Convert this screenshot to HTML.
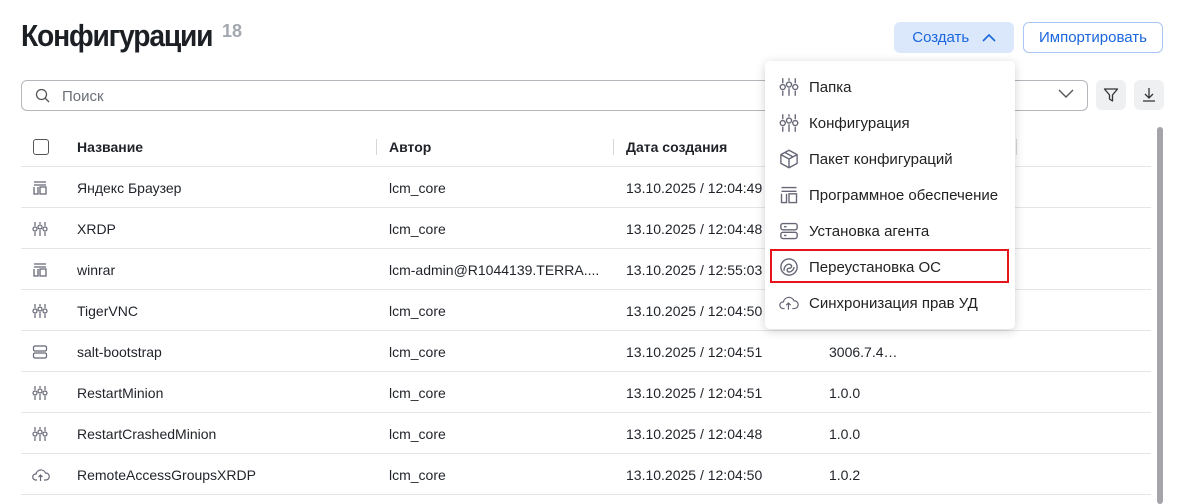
<!DOCTYPE html><html><head><meta charset="utf-8"><style>
*{box-sizing:border-box;margin:0;padding:0}
body{width:1184px;height:504px;overflow:hidden;background:#fff;font-family:"Liberation Sans",sans-serif;color:#1f2329;position:relative;font-size:14px}
.a{position:absolute}
h1{position:absolute;left:21px;top:18px;font-size:31px;font-weight:bold;letter-spacing:-1.3px;color:#1c1f23;transform:scaleX(0.91);transform-origin:0 0}
.cnt{left:222px;top:21px;font-size:18px;color:#a3a8b0;font-weight:bold}
.btn{top:22px;height:31px;border-radius:6px;font-size:15px;color:#1a66dd;display:flex;align-items:center;justify-content:center}
.hl{top:166px;left:21px;width:1130px;height:1px;background:#e3e5e8}
.row{position:absolute;left:0;width:1150px;height:41px}
.row span{position:absolute;top:13px;font-size:14px}
.ic{position:absolute;left:32px;top:13px}
.dd{left:765px;top:61px;width:250px;height:268px;background:#fff;border-radius:5px;box-shadow:0 2px 10px rgba(0,0,0,.18)}
.it{position:absolute;left:0;height:36px;width:250px}
.it span{position:absolute;left:44px;top:10px;font-size:15px;color:#222}
.it svg{position:absolute;left:14px;top:8px}
</style></head><body>
<h1>Конфигурации</h1><div class="a cnt">18</div>
<div class="a btn" style="left:894px;width:120px;background:#dbe8fc">Создать&nbsp;&nbsp;&nbsp;<svg width="14" height="9" viewBox="0 0 14 9"><path d="M1 8L7 2L13 8" fill="none" stroke="#1a66dd" stroke-width="1.6"/></svg></div>
<div class="a btn" style="left:1023px;width:140px;border:1px solid #a9c6f5">Импортировать</div>
<div class="a" style="left:21px;top:80px;width:1067px;height:31px;border:1px solid #b3b6bb;border-radius:6px"></div>
<svg class="a" style="left:35px;top:88px" width="15" height="15" viewBox="0 0 15 15"><circle cx="6.5" cy="6.5" r="5" fill="none" stroke="#555" stroke-width="1.3"/><path d="M10 10L14 14" stroke="#555" stroke-width="1.3"/></svg>
<div class="a" style="left:62px;top:88px;font-size:15px;color:#6b7078">Поиск</div>
<svg class="a" style="left:1058px;top:89px" width="16" height="10" viewBox="0 0 16 10"><path d="M1 1L8 8L15 1" fill="none" stroke="#555" stroke-width="1.4"/></svg>
<div class="a" style="left:1096px;top:80px;width:30px;height:30px;background:#eff0f2;border-radius:6px"></div>
<svg class="a" style="left:1103px;top:87px" width="16" height="16" viewBox="0 0 16 16"><path d="M1.5 2H14.5L9.5 8V14L6.5 12V8Z" fill="none" stroke="#333" stroke-width="1.3" stroke-linejoin="round"/></svg>
<div class="a" style="left:1134px;top:80px;width:30px;height:30px;background:#eff0f2;border-radius:6px"></div>
<svg class="a" style="left:1141px;top:87px" width="16" height="16" viewBox="0 0 16 16"><path d="M8 1V11M4 7L8 11L12 7M2 14H14" fill="none" stroke="#333" stroke-width="1.3"/></svg>
<div class="a" style="left:33px;top:139px;width:16px;height:16px;border:1.5px solid #555;border-radius:3px"></div>
<div class="a" style="left:77px;top:139px;font-weight:bold">Название</div>
<div class="a" style="left:376px;top:139px;width:1px;height:16px;background:#d5d7da"></div>
<div class="a" style="left:389px;top:139px;font-weight:bold">Автор</div>
<div class="a" style="left:613px;top:139px;width:1px;height:16px;background:#d5d7da"></div>
<div class="a" style="left:626px;top:139px;font-weight:bold">Дата создания</div>
<div class="a" style="left:1016px;top:139px;width:1px;height:16px;background:#d5d7da"></div>
<div class="a hl"></div>
<div class="a" style="left:1157px;top:127px;width:6px;height:377px;background:#a3a5a8;border-radius:3px"></div>

<div class="row" style="top:167px"><svg class="ic" width="16" height="16" viewBox="0 0 16 16"><path d="M2 2H14M2 5H14M2 7V14H6V7M8 7H14V14H8Z" fill="none" stroke="#667" stroke-width="1.3"/></svg><span style="left:77px">Яндекс Браузер</span><span style="left:389px">lcm_core</span><span style="left:626px">13.10.2025 / 12:04:49</span></div>
<div class="a hl" style="top:207px"></div>
<div class="row" style="top:208px"><svg class="ic" width="16" height="16" viewBox="0 0 16 16"><g fill="none" stroke="#667" stroke-width="1.2"><path d="M3 1V5M3 11V15M8 1V3M8 9V15M13 1V5M13 11V15"/><circle cx="3" cy="8" r="2"/><circle cx="8" cy="6" r="2"/><circle cx="13" cy="8" r="2"/></g></svg><span style="left:77px">XRDP</span><span style="left:389px">lcm_core</span><span style="left:626px">13.10.2025 / 12:04:48</span></div>
<div class="a hl" style="top:248px"></div>
<div class="row" style="top:249px"><svg class="ic" width="16" height="16" viewBox="0 0 16 16"><path d="M2 2H14M2 5H14M2 7V14H6V7M8 7H14V14H8Z" fill="none" stroke="#667" stroke-width="1.3"/></svg><span style="left:77px">winrar</span><span style="left:389px">lcm-admin@R1044139.TERRA....</span><span style="left:626px">13.10.2025 / 12:55:03</span></div>
<div class="a hl" style="top:289px"></div>
<div class="row" style="top:290px"><svg class="ic" width="16" height="16" viewBox="0 0 16 16"><g fill="none" stroke="#667" stroke-width="1.2"><path d="M3 1V5M3 11V15M8 1V3M8 9V15M13 1V5M13 11V15"/><circle cx="3" cy="8" r="2"/><circle cx="8" cy="6" r="2"/><circle cx="13" cy="8" r="2"/></g></svg><span style="left:77px">TigerVNC</span><span style="left:389px">lcm_core</span><span style="left:626px">13.10.2025 / 12:04:50</span></div>
<div class="a hl" style="top:330px"></div>
<div class="row" style="top:331px"><svg class="ic" width="16" height="16" viewBox="0 0 16 16"><g fill="none" stroke="#667" stroke-width="1.2"><rect x="1.5" y="2" width="13" height="5" rx="1.5"/><rect x="1.5" y="9" width="13" height="5" rx="1.5"/></g></svg><span style="left:77px">salt-bootstrap</span><span style="left:389px">lcm_core</span><span style="left:626px">13.10.2025 / 12:04:51</span><span style="left:829px">3006.7.4…</span></div>
<div class="a hl" style="top:371px"></div>
<div class="row" style="top:372px"><svg class="ic" width="16" height="16" viewBox="0 0 16 16"><g fill="none" stroke="#667" stroke-width="1.2"><path d="M3 1V5M3 11V15M8 1V3M8 9V15M13 1V5M13 11V15"/><circle cx="3" cy="8" r="2"/><circle cx="8" cy="6" r="2"/><circle cx="13" cy="8" r="2"/></g></svg><span style="left:77px">RestartMinion</span><span style="left:389px">lcm_core</span><span style="left:626px">13.10.2025 / 12:04:51</span><span style="left:829px">1.0.0</span></div>
<div class="a hl" style="top:412px"></div>
<div class="row" style="top:413px"><svg class="ic" width="16" height="16" viewBox="0 0 16 16"><g fill="none" stroke="#667" stroke-width="1.2"><path d="M3 1V5M3 11V15M8 1V3M8 9V15M13 1V5M13 11V15"/><circle cx="3" cy="8" r="2"/><circle cx="8" cy="6" r="2"/><circle cx="13" cy="8" r="2"/></g></svg><span style="left:77px">RestartCrashedMinion</span><span style="left:389px">lcm_core</span><span style="left:626px">13.10.2025 / 12:04:48</span><span style="left:829px">1.0.0</span></div>
<div class="a hl" style="top:453px"></div>
<div class="row" style="top:454px"><svg class="ic" width="18" height="16" viewBox="0 0 18 16"><path d="M5 13H3.5A3 3 0 0 1 4 7A5 5 0 0 1 13.5 6A3.5 3.5 0 0 1 14 13H12M8.5 14V8M6.5 10L8.5 8L10.5 10" fill="none" stroke="#667" stroke-width="1.2"/></svg><span style="left:77px">RemoteAccessGroupsXRDP</span><span style="left:389px">lcm_core</span><span style="left:626px">13.10.2025 / 12:04:50</span><span style="left:829px">1.0.2</span></div>
<div class="a hl" style="top:494px"></div>

<div class="a dd">
<div class="it" style="top:8px"><svg width="20" height="20" viewBox="0 0 16 16"><g fill="none" stroke="#667" stroke-width="1.1"><path d="M3 1V5M3 11V15M8 1V3M8 9V15M13 1V5M13 11V15"/><circle cx="3" cy="8" r="2"/><circle cx="8" cy="6" r="2"/><circle cx="13" cy="8" r="2"/></g></svg><span>Папка</span></div>
<div class="it" style="top:44px"><svg width="20" height="20" viewBox="0 0 16 16"><g fill="none" stroke="#667" stroke-width="1.1"><path d="M3 1V5M3 11V15M8 1V3M8 9V15M13 1V5M13 11V15"/><circle cx="3" cy="8" r="2"/><circle cx="8" cy="6" r="2"/><circle cx="13" cy="8" r="2"/></g></svg><span>Конфигурация</span></div>
<div class="it" style="top:80px"><svg width="20" height="20" viewBox="0 0 16 16"><path d="M8 1L14.5 4.5V11.5L8 15L1.5 11.5V4.5ZM1.5 4.5L8 8L14.5 4.5M8 8V15M4.8 2.8L11.2 6.3" fill="none" stroke="#667" stroke-width="1.1" stroke-linejoin="round"/></svg><span>Пакет конфигураций</span></div>
<div class="it" style="top:116px"><svg width="20" height="20" viewBox="0 0 16 16"><path d="M2 2H14M2 5H14M2 7V14H6V7M8 7H14V14H8Z" fill="none" stroke="#667" stroke-width="1.1"/></svg><span>Программное обеспечение</span></div>
<div class="it" style="top:152px"><svg width="20" height="20" viewBox="0 0 16 16"><g fill="none" stroke="#667" stroke-width="1.1"><rect x="1.5" y="2" width="13" height="5" rx="1.5"/><rect x="1.5" y="9" width="13" height="5" rx="1.5"/><path d="M4 4.5H6M4 11.5H6"/></g></svg><span>Установка агента</span></div>
<div class="it" style="top:188px"><svg width="20" height="20" viewBox="0 0 16 16"><g fill="none" stroke="#667" stroke-width="1.1"><circle cx="8" cy="8" r="6.5"/><path d="M4 11C4 7 7 5 9 6C11 7 10 9 8 9C6 9 6 12 8 12C10 12 12 10 12 8"/></g></svg><span>Переустановка ОС</span></div>
<div class="it" style="top:224px"><svg width="20" height="20" viewBox="0 0 18 16"><path d="M5 13H3.5A3 3 0 0 1 4 7A5 5 0 0 1 13.5 6A3.5 3.5 0 0 1 14 13H12M8.5 14V8M6.5 10L8.5 8L10.5 10" fill="none" stroke="#667" stroke-width="1.1"/></svg><span>Синхронизация прав УД</span></div>
</div>
<div class="a" style="left:770px;top:249px;width:239px;height:34px;border:2px solid #e8141c"></div>
</body></html>
